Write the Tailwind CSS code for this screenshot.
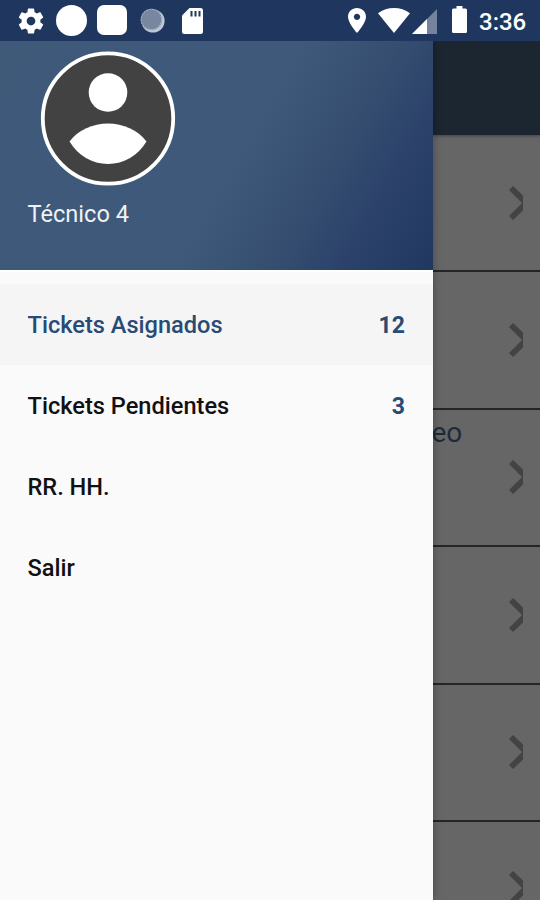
<!DOCTYPE html>
<html lang="es">
<head>
<meta charset="utf-8">
<title>Tickets</title>
<script src="https://cdn.jsdelivr.net/npm/@tailwindcss/browser@4"></script>
</head>
<body class="w-[540px] h-[900px] overflow-hidden bg-[#666666] font-[Roboto,sans-serif]">
<div class="relative flex h-[900px] w-[540px] flex-col overflow-hidden">
  <header class="relative z-20 flex h-[41px] shrink-0 items-start bg-[#1f375f] text-white">
    <svg class="ml-[16px] mt-[6px] size-[30px] shrink-0" viewBox="0 0 24 24" fill="currentColor"><path d="M19.43 12.98c.04-.32.07-.64.07-.98s-.03-.66-.07-.98l2.11-1.65c.19-.15.24-.42.12-.64l-2-3.46c-.12-.22-.39-.3-.61-.22l-2.49 1c-.52-.4-1.08-.73-1.69-.98l-.38-2.65C14.46 2.18 14.25 2 14 2h-4c-.25 0-.46.18-.49.42l-.38 2.65c-.61.25-1.17.59-1.69.98l-2.49-1c-.23-.09-.49 0-.61.22l-2 3.46c-.13.22-.07.49.12.64l2.11 1.65c-.04.32-.07.65-.07.98s.03.66.07.98l-2.11 1.65c-.19.15-.24.42-.12.64l2 3.46c.12.22.39.3.61.22l2.49-1c.52.4 1.08.73 1.69.98l.38 2.65c.03.24.24.42.49.42h4c.25 0 .46-.18.49-.42l.38-2.65c.61-.25 1.17-.59 1.69-.98l2.49 1c.23.09.49 0 .61-.22l2-3.46c.12-.22.07-.49-.12-.64l-2.11-1.65zM12 15.5c-1.93 0-3.5-1.57-3.5-3.5s1.57-3.5 3.5-3.5 3.5 1.57 3.5 3.5-1.57 3.5-3.5 3.5z"/></svg>
    <span class="ml-[10px] mt-[5px] size-[31px] shrink-0 rounded-full bg-white"></span>
    <span class="ml-[10px] mt-[5px] size-[30px] shrink-0 rounded-[7px] bg-white"></span>
    <svg class="ml-[13px] mt-[8px] size-[25px] shrink-0" viewBox="0 0 25 25"><circle cx="13" cy="13" r="11.6" fill="#bcc6d5"/><circle cx="11.4" cy="11.4" r="10.6" fill="#78869f"/><circle cx="11.4" cy="11.4" r="10.2" fill="none" stroke="#a3afc1" stroke-width="1.1" stroke-dasharray="2 1"/></svg>
    <svg class="ml-[17px] mt-[8px] h-[26px] w-[21px] shrink-0" viewBox="0 0 21 26"><path fill="#fff" d="M7.5 0H18.5Q21 0 21 2.5V23.5Q21 26 18.5 26H2.500Q0 26 0 23.500V7.500Z"/><path stroke="#1f375f" stroke-width="2" d="M9.500 3V8.500M13.500 3V8.500M17.500 3V8.500"/></svg>
    <svg class="ml-[145px] mt-[8px] h-[25px] w-[18px] shrink-0" viewBox="5 2 14 20" preserveAspectRatio="none" fill="currentColor"><path d="M12 2C8.130 2 5 5.130 5 9c0 5.250 7 13 7 13s7-7.750 7-13c0-3.870-3.130-7-7-7zm0 9.500c-1.380 0-2.500-1.120-2.500-2.500s1.120-2.500 2.500-2.500 2.500 1.120 2.500 2.500-1.120 2.500-2.500 2.500z"/></svg>
    <svg class="ml-[12px] mt-[8px] h-[25px] w-[32px] shrink-0" viewBox="0 0 32 25"><path fill="#fff" d="M0 5.200C9-1.700 23-1.700 32 5.200L16 25Z"/></svg>
    <svg class="ml-[2px] mt-[9px] size-[25px] shrink-0" viewBox="0 0 25 25"><path fill="#7484a0" d="M25 0V25H0Z"/><path fill="#fff" d="M15 10V25H0Z"/></svg>
    <svg class="ml-[15px] mt-[6px] h-[27px] w-[15px] shrink-0" viewBox="0 0 15 27"><path fill="#fff" d="M4.500 0H10.500V2.500H13.500Q15 2.500 15 4V25.500Q15 27 13.500 27H1.500Q0 27 0 25.500V4Q0 2.500 1.500 2.500H4.500Z"/></svg>
    <span class="ml-[12px] mt-[7px] text-[24px] leading-[30px] font-medium whitespace-nowrap">3:36</span>
  </header>

  <div class="flex min-h-0 flex-1">
    <aside class="z-10 flex w-[432.500px] shrink-0 flex-col bg-[#fafafa] shadow-[0_0_8px_rgba(0,0,0,0.3)]">
      <div class="flex h-[229px] shrink-0 flex-col items-start bg-[linear-gradient(120deg,#3f5a79_0%,#3e5979_54%,#364f70_70%,#2c426b_83%,#203860_100%)] pt-[10px] pl-[27.500px]">
        <svg class="ml-[12px] size-[136px]" viewBox="0 0 136 136"><circle cx="68" cy="67.500" r="65.200" fill="#424242" stroke="#fff" stroke-width="3.800"/><circle cx="68" cy="41.500" r="19.300" fill="#fff"/><path fill="#fff" d="M29.500 90.500C38 79 53 72.500 68 72.500S98 79 106.500 90.500C98 104.500 84 113 68 113S38 104.500 29.500 90.500Z"/></svg>
        <p class="mt-[11px] text-[23.600px] leading-[32px] text-[#eef2f7]">Técnico 4</p>
      </div>
      <nav class="flex flex-col border-t-2 border-white pt-[12px] text-[23.600px] font-medium text-[#111111]">
        <a class="flex h-[81px] items-center justify-between bg-[#f5f5f5] pt-[2px] pr-[27.500px] pl-[27.500px] text-[#284b75]"><span>Tickets Asignados</span><span class="pt-[1px] text-[23px] font-bold">12</span></a>
        <a class="flex h-[81px] items-center justify-between pt-[2px] pr-[27.500px] pl-[27.500px]"><span>Tickets Pendientes</span><span class="pt-[1px] text-[23px] font-bold text-[#284b75]">3</span></a>
        <a class="flex h-[81px] items-center pt-[2px] pl-[27.500px]">RR. HH.</a>
        <a class="flex h-[81px] items-center pt-[2px] pl-[27.500px]">Salir</a>
      </nav>
    </aside>

    <main class="flex min-w-0 flex-1 flex-col bg-[#666666]">
      <div class="h-[94px] shrink-0 bg-[#1b2631] shadow-[0_1px_3px_rgba(0,0,0,0.35)]"></div>
      <div class="flex h-[137.400px] shrink-0 items-center justify-end border-b-2 border-[#252525] pr-[17px]"><svg class="h-[34px] w-[14px]" viewBox="0 0 14 34"><path d="M4 0L14 9.500V24.500L4 34L0 30L13 17L0 4Z" fill="#434343"/></svg></div>
      <div class="flex h-[137.400px] shrink-0 items-center justify-end border-b-2 border-[#252525] pr-[17px]"><svg class="h-[34px] w-[14px]" viewBox="0 0 14 34"><path d="M4 0L14 9.500V24.500L4 34L0 30L13 17L0 4Z" fill="#434343"/></svg></div>
      <div class="flex h-[137.400px] shrink-0 items-center justify-between border-b-2 border-[#252525] pr-[17px]"><span class="-ml-[1px] self-start pt-[7px] text-[28px] leading-[32px] text-[#1e2a3a]">eo</span><svg class="h-[34px] w-[14px]" viewBox="0 0 14 34"><path d="M4 0L14 9.500V24.500L4 34L0 30L13 17L0 4Z" fill="#434343"/></svg></div>
      <div class="flex h-[137.400px] shrink-0 items-center justify-end border-b-2 border-[#252525] pr-[17px]"><svg class="h-[34px] w-[14px]" viewBox="0 0 14 34"><path d="M4 0L14 9.500V24.500L4 34L0 30L13 17L0 4Z" fill="#434343"/></svg></div>
      <div class="flex h-[137.400px] shrink-0 items-center justify-end border-b-2 border-[#252525] pr-[17px]"><svg class="h-[34px] w-[14px]" viewBox="0 0 14 34"><path d="M4 0L14 9.500V24.500L4 34L0 30L13 17L0 4Z" fill="#434343"/></svg></div>
      <div class="flex h-[134px] shrink-0 items-center justify-end border-b-2 border-[#252525] pr-[17px]"><svg class="h-[34px] w-[14px]" viewBox="0 0 14 34"><path d="M4 0L14 9.500V24.500L4 34L0 30L13 17L0 4Z" fill="#434343"/></svg></div>
    </main>
  </div>
</div>
</body>
</html>
